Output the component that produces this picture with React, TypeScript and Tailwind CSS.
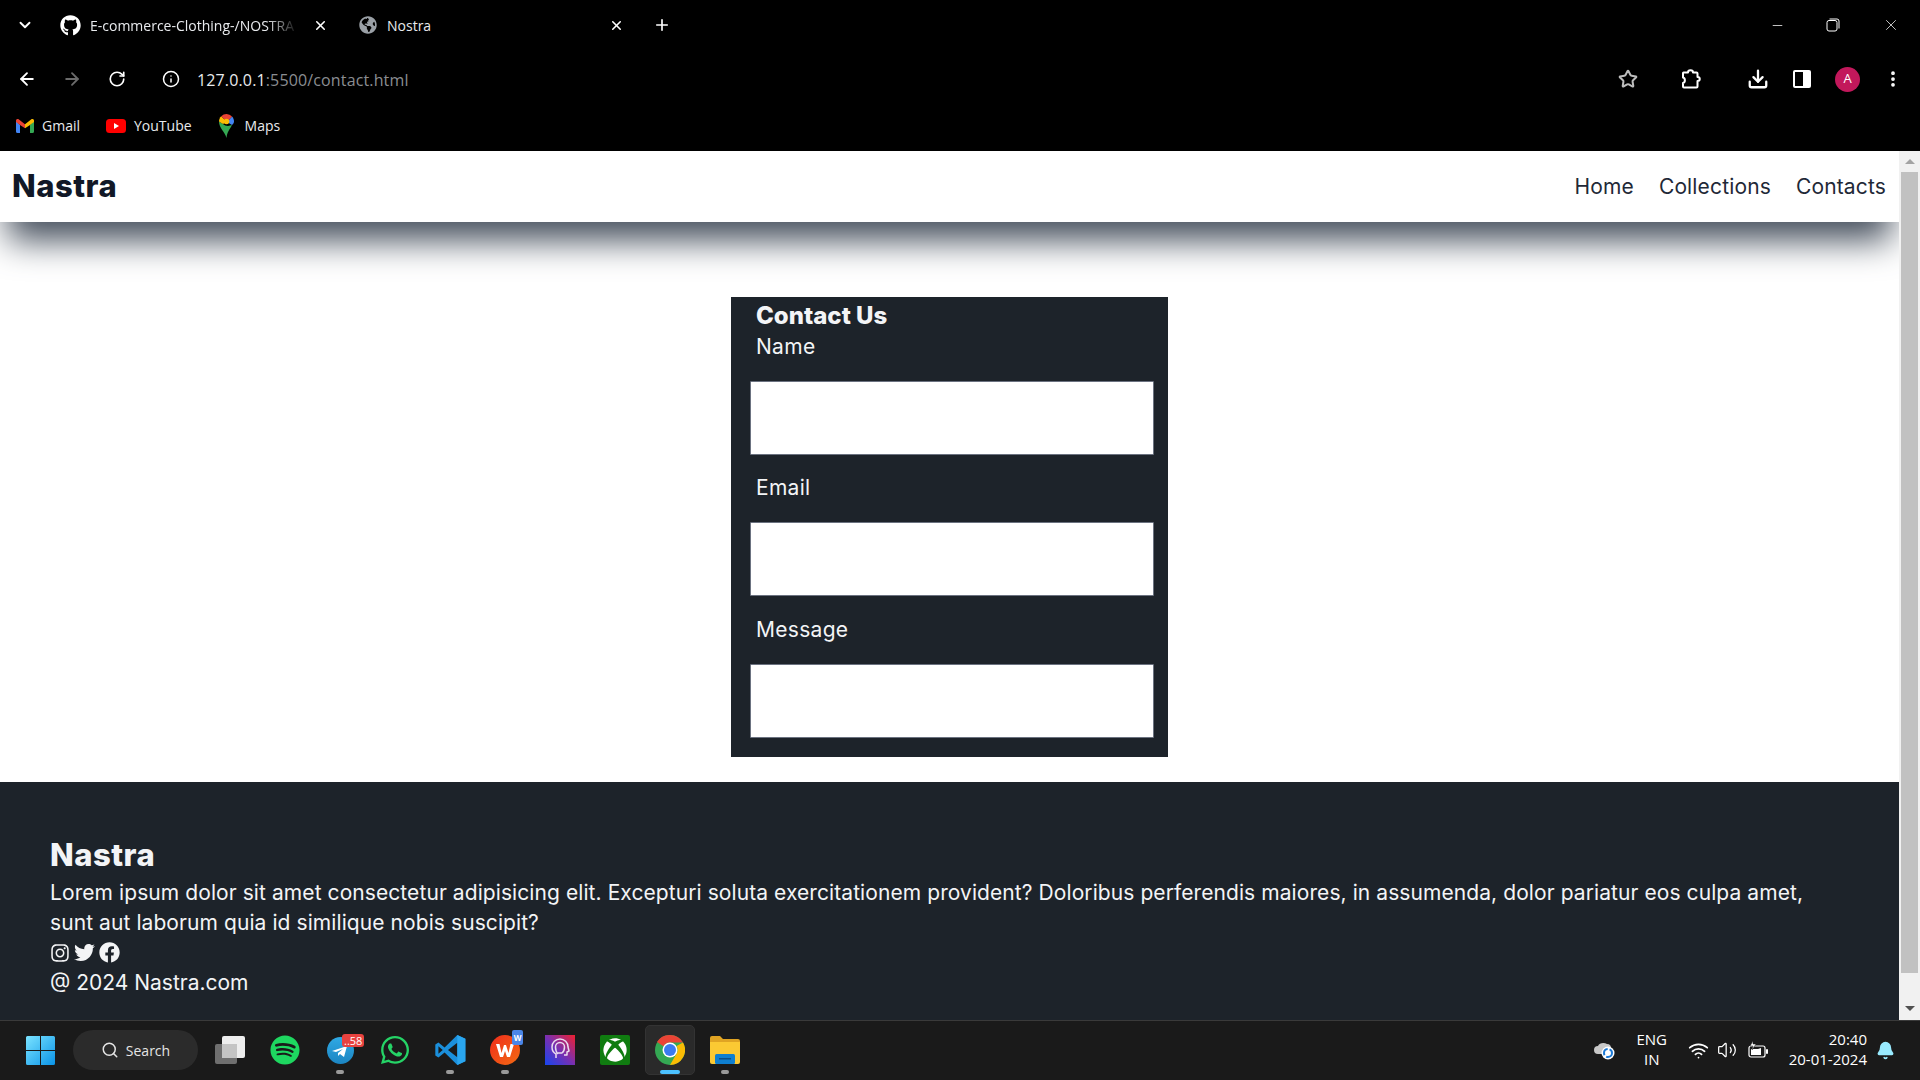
import { ArrowLeft, ArrowRight, ChevronDown, Download, Info, MoreVertical, Plus, RotateCw, Search, Star, Volume2, Wifi, X, Minus, Bell } from 'lucide-react';
import { FaFacebook, FaGithub, FaGlobeAmericas, FaInstagram, FaSpotify, FaTwitter, FaWhatsapp, FaXbox } from 'react-icons/fa';

const page = { fontFamily: 'Inter, "Noto Sans", sans-serif' };
const ui = { fontFamily: '"Open Sans", "Noto Sans", sans-serif' };

const GmailIcon = () => (
  <svg width="18" height="14" viewBox="0 0 18 14">
    <path d="M0 2v10.500A1.500 1.500 0 0 0 1.500 14H4V6z" fill="#4285f4" />
    <path d="M18 2v10.500a1.500 1.500 0 0 1-1.500 1.500H14V6z" fill="#34a853" />
    <path d="M4 6 0 3V1.500C0 .2 1.600-.5 2.600.3L9 5.200v4z" fill="#ea4335" />
    <path d="m14 6 4-3V1.500c0-1.300-1.600-2-2.600-1.200L9 5.200v4z" fill="#fbbc04" />
  </svg>
);

const YoutubeIcon = () => (
  <svg width="20" height="14" viewBox="0 0 20 14">
    <rect width="20" height="14" rx="3.500" fill="#f00" />
    <path d="m8 4 5 3-5 3z" fill="#fff" />
  </svg>
);

const MapsIcon = () => (
  <svg width="15" height="24" viewBox="0 0 15 24">
    <path d="M7.500 24C6 18 0 14 0 7.500L4 10c1 1 3 2 5 2l4-1c-2 4-5 7-5.500 13z" fill="#34a853" />
    <path d="M13 11c1-1 2-2 2-3.500 0-2-.8-3.700-2-5L8 8z" fill="#4285f4" />
    <path d="M0 7.500c0-2 .8-3.800 2.200-5.200L8 8l-4 2z" fill="#fbbc04" />
    <path d="M2.200 2.300A7.500 7.500 0 0 1 13 2.500L8 8z" fill="#ea4335" />
    <circle cx="7.500" cy="7.500" r="2.800" fill="#fbbc04" />
  </svg>
);

const PuzzleIcon = () => (
  <svg width="22" height="20" viewBox="0 0 22 20" fill="none" stroke="#fff" strokeWidth="2" strokeLinejoin="round">
    <path d="M2.500 3.500h4.500c0-3 5-3 5 0h3.500a1 1 0 0 1 1 1V8c3 0 3 4 0 4v5.500a1 1 0 0 1-1 1H3a1 1 0 0 1-1-1V14c2.500-.5 2.500-5 0-5.500V4a.5.5 0 0 1 .5-.5z" />
  </svg>
);

const PanelIcon = () => (
  <svg width="18" height="18" viewBox="0 0 18 18">
    <rect width="18" height="18" rx="2" fill="#fff" />
    <rect x="2" y="2" width="8" height="14" fill="#000" />
  </svg>
);

const WindowsLogo = () => (
  <svg width="29" height="29" viewBox="0 0 29 29">
    <defs>
      <linearGradient id="win" x1="0" y1="0" x2="1" y2="1">
        <stop offset="0" stopColor="#7be3ff" />
        <stop offset="1" stopColor="#0a94e8" />
      </linearGradient>
    </defs>
    <path d="M0 1.500A1.500 1.500 0 0 1 1.500 0H14v14H0zM15 0h12.500A1.500 1.500 0 0 1 29 1.500V14H15zM0 15h14v14H1.500A1.500 1.500 0 0 1 0 27.500zM15 15h14v12.500a1.500 1.500 0 0 1-1.500 1.500H15z" fill="url(#win)" />
  </svg>
);

const TaskViewIcon = () => (
  <svg width="30" height="28" viewBox="0 0 30 28">
    <rect x="7" y="0" width="23" height="22" rx="2" fill="#eeeeee" />
    <rect x="0" y="8" width="22" height="20" rx="2" fill="#6f6f6f" />
    <rect x="7" y="8" width="15" height="14" fill="#c4c4c4" />
  </svg>
);

const TelegramIcon = () => (
  <div className="relative h-[30px] w-[30px]">
    <svg width="27" height="27" viewBox="0 0 27 27" className="ml-[2px] mt-[2px]">
      <defs>
        <linearGradient id="tg" x1="0" y1="0" x2="0" y2="1">
          <stop offset="0" stopColor="#2fa9e4" />
          <stop offset="1" stopColor="#1c85c2" />
        </linearGradient>
      </defs>
      <circle cx="13.500" cy="13.500" r="13.500" fill="url(#tg)" />
      <path d="m5 14 15-5-3 11-4-3-2 2v-3l5-4-7 3z" fill="#fff" />
    </svg>
    <span className="absolute -top-[1px] left-[17px] rounded-[3px] bg-[#e8423f] px-[2px] text-[11px] leading-[13px] text-white" style={ui}>..58</span>
  </div>
);

const VscodeIcon = () => (
  <svg width="31" height="32" viewBox="0 0 100 100">
    <path d="M72 2 31 42 11 26 1 32v36l10 6 20-16 41 40 26-12V14z" fill="#1b8fdb" />
    <path d="M72 27v46L42 50z" fill="#1a1a1a" />
    <path d="M11 38v24l14-12z" fill="#1a1a1a" />
    <path d="M72 2l26 12v72L72 98z" fill="#2aa6ef" />
  </svg>
);

const WpsIcon = () => (
  <div className="relative h-[30px] w-[30px]">
    <svg width="30" height="30" viewBox="0 0 30 30">
      <defs>
        <linearGradient id="wps" x1="0" y1="0" x2="1" y2="1">
          <stop offset="0" stopColor="#f02d1c" />
          <stop offset="1" stopColor="#f26a12" />
        </linearGradient>
      </defs>
      <circle cx="15" cy="15" r="15" fill="url(#wps)" />
      <path d="M6 9h3.500l2 9 2.500-8h2l2.500 8 2-9H24l-4 13h-3l-2-6-2 6h-3z" fill="#fff" />
    </svg>
    <div className="absolute -top-[5px] left-[22px] flex h-[15px] w-[11px] items-center justify-center rounded-[2px] bg-[#4a86e8] text-[8px] font-bold text-white" style={ui}>W</div>
  </div>
);

const ArcIcon = () => (
  <svg width="30" height="30" viewBox="0 0 30 30">
    <defs>
      <linearGradient id="arc" x1="0" y1="1" x2="1" y2="0">
        <stop offset="0" stopColor="#1646f0" />
        <stop offset=".5" stopColor="#7a2fb0" />
        <stop offset="1" stopColor="#f0202e" />
      </linearGradient>
    </defs>
    <rect width="30" height="30" fill="url(#arc)" />
    <path d="M11 23v-4c-2-1-4-3-4-7a8 8 0 0 1 16 0l1 4-2 1v3h-3M13 19c-1.500-1.500-2.500-4-2.500-7a4.500 4.500 0 0 1 9 0c0 3-1 5-2.500 6h-4" fill="none" stroke="#eadcf0" strokeWidth="1.500" strokeLinejoin="round" />
  </svg>
);

const ChromeIcon = () => (
  <svg width="30" height="30" viewBox="0 0 30 30">
    <circle cx="15" cy="15" r="15" fill="#34a853" />
    <path d="M15 0a15 15 0 0 1 13 7.500H15a7.500 7.500 0 0 0-6.500 3.750L2 7A15 15 0 0 1 15 0z" fill="#ea4335" />
    <path d="M28 7.500A15 15 0 0 1 15 30l6.500-11.250A7.500 7.500 0 0 0 21.500 11z" fill="#fbbc04" />
    <circle cx="15" cy="15" r="7.500" fill="#fff" />
    <circle cx="15" cy="15" r="6" fill="#3b7bf0" />
  </svg>
);

const FolderIcon = () => (
  <svg width="30" height="28" viewBox="0 0 30 28">
    <path d="M0 2a2 2 0 0 1 2-2h8l3 3h15a2 2 0 0 1 2 2v3H0z" fill="#e0a423" />
    <path d="M0 6h30v20a2 2 0 0 1-2 2H2a2 2 0 0 1-2-2z" fill="#fbc933" />
    <rect x="5" y="18" width="20" height="10" rx="1.500" fill="#0f7fd0" />
    <rect x="9" y="22" width="12" height="1.500" fill="#0a4f8a" />
  </svg>
);

const CloudSyncIcon = () => (
  <svg width="21" height="20" viewBox="0 0 21 20">
    <path d="M4 14a4 4 0 0 1 0-8c1-3 6-4 9-2 3 0 4 2 4 4v6z" fill="#c8c8c8" />
    <circle cx="14" cy="13" r="6.500" fill="#fff" />
    <circle cx="14" cy="13" r="4" fill="none" stroke="#1b79d6" strokeWidth="2" strokeDasharray="8 2" />
  </svg>
);

const BatteryIcon = () => (
  <svg width="21" height="18" viewBox="0 0 21 18" fill="none">
    <rect x="1" y="5" width="16" height="11" rx="2" stroke="#fff" strokeWidth="1.200" />
    <path d="M3 14V8h7l3-1v7z" fill="#fff" />
    <rect x="18" y="8" width="2" height="5" rx="1" fill="#fff" />
    <path d="m5 0-3 5h3l-1 4 4-6H5z" fill="#fff" stroke="#1a1a1a" strokeWidth=".5" />
  </svg>
);

const Field = ({ label }: { label: string }) => (
  <div className="flex flex-col">
    <label className="ml-[25px] h-[34px] text-[21px] leading-[32px] tracking-[0.3px] text-[#f3f4f6]">{label}</label>
    <input className="ml-[19px] mt-[16px] h-[74px] w-[404px] rounded-[1px] border border-[#6b7280] bg-white" />
  </div>
);

const taskbarApps = [
  { icon: <TaskViewIcon /> },
  { icon: <FaSpotify size={30} color="#1ed760" /> },
  { icon: <TelegramIcon />, dot: true },
  { icon: <FaWhatsapp size={32} color="#25d366" /> },
  { icon: <VscodeIcon />, dot: true },
  { icon: <WpsIcon />, dot: true },
  { icon: <ArcIcon /> },
  { icon: <div className="flex h-[30px] w-[30px] items-center justify-center rounded-[2px] bg-[#107c10]"><FaXbox size={24} color="#fff" /></div> },
  { icon: <ChromeIcon />, active: true },
  { icon: <FolderIcon />, dot: true },
];

export default function App() {
  return (
    <div className="flex h-screen w-full flex-col overflow-hidden bg-white">
      {/* Browser chrome */}
      <header className="h-[151px] shrink-0 bg-black text-white" style={ui}>
        {/* Tabs */}
        <div className="flex h-[50px] items-center">
          <ChevronDown size={18} strokeWidth={2.5} className="ml-[16px]" />
          <FaGithub size={21} className="ml-[26px]" />
          <div className="ml-[9px] w-[208px] overflow-hidden whitespace-nowrap text-[14px] text-[#e8eaed] [mask-image:linear-gradient(to_right,black_85%,transparent)]">E-commerce-Clothing-/NOSTRA</div>
          <X size={15} strokeWidth={2.5} className="ml-[15px]" />
          <FaGlobeAmericas size={18} color="#9aa0a6" className="ml-[31px]" />
          <div className="ml-[10px] w-[214px] text-[14px] text-[#e8eaed]">Nostra</div>
          <X size={15} strokeWidth={2.5} className="ml-[8px]" />
          <Plus size={18} strokeWidth={2.2} className="ml-[29px]" />
          <Minus size={15} strokeWidth={1.2} className="ml-auto" />
          <svg width="14" height="14" viewBox="0 0 14 14" fill="none" stroke="#fff" className="ml-[41px]">
            <rect x="1" y="2.500" width="10" height="10.500" rx="2" />
            <path d="M3.500 1H11a2 2 0 0 1 2 2v7.500" />
          </svg>
          <X size={18} strokeWidth={1} className="ml-[42px] mr-[20px]" />
        </div>
        {/* Address bar */}
        <div className="flex h-[58px] items-center">
          <ArrowLeft size={20} strokeWidth={2.2} className="ml-[17px]" />
          <ArrowRight size={20} strokeWidth={2.2} color="#6b6b6b" className="ml-[25px]" />
          <RotateCw size={18} strokeWidth={2.2} className="ml-[26px]" />
          <Info size={18} strokeWidth={2} className="ml-[36px]" />
          <div className="ml-[17px] mt-[2px] text-[16px] leading-[26px] tracking-[0.14px] text-[#e8eaed]">
            127.0.0.1<span className="text-[#8a8d91]">:5500/contact.html</span>
          </div>
          <Star size={20} strokeWidth={2.4} color="#bdbdbd" className="ml-auto" />
          <div className="ml-[43px]"><PuzzleIcon /></div>
          <Download size={22} strokeWidth={2.5} className="ml-[44px]" />
          <div className="ml-[24px]"><PanelIcon /></div>
          <div className="ml-[24px] flex h-[25px] w-[25px] items-center justify-center rounded-full bg-[#c2185b] text-[13px]">A</div>
          <MoreVertical size={20} strokeWidth={2.5} className="ml-[23px] mr-[17px]" />
        </div>
        {/* Bookmarks */}
        <div className="flex h-[35px] items-center text-[14px] text-[#e8eaed]">
          <div className="ml-[16px]"><GmailIcon /></div>
          <span className="ml-[8px]">Gmail</span>
          <div className="ml-[26px]"><YoutubeIcon /></div>
          <span className="ml-[8px]">YouTube</span>
          <div className="ml-[27px] flex"><MapsIcon /></div>
          <span className="ml-[11px]">Maps</span>
        </div>
      </header>

      <div className="flex min-h-0 flex-1">
        {/* Page */}
        <div className="flex min-w-0 flex-1 flex-col overflow-hidden" style={page}>
          <nav className="relative z-10 flex h-[71px] shrink-0 items-center justify-between bg-white pl-[12px] pr-[13px] shadow-[0_26px_35px_-8px_#414b59]">
            <span className="text-[31px] font-extrabold tracking-[0.5px] text-[#111827]">Nastra</span>
            <div className="flex gap-[25px] text-[21px] tracking-[0.15px] text-[#1f2937]">
              <a>Home</a>
              <a>Collections</a>
              <a>Contacts</a>
            </div>
          </nav>

          <main className="flex h-[560px] shrink-0 justify-center pt-[75px]">
            <form className="h-[460px] w-[437px] bg-[#1d232a]">
              <h2 className="ml-[25px] h-[34px] text-[24px] font-extrabold leading-[37px] tracking-[0px] text-[#f3f4f6]">Contact Us</h2>
              <Field label="Name" />
              <div className="h-[17px]" />
              <Field label="Email" />
              <div className="h-[18px]" />
              <Field label="Message" />
            </form>
          </main>

          <footer className="flex-1 bg-[#1d232a] px-[50px] pt-[52px] text-[#f3f4f6]">
            <h3 className="h-[44px] text-[31px] font-extrabold leading-[42px] tracking-[0.5px]">Nastra</h3>
            <p className="text-[21px] leading-[30px] tracking-[0.08px]">
              Lorem ipsum dolor sit amet consectetur adipisicing elit. Excepturi soluta exercitationem provident? Doloribus perferendis maiores, in assumenda, dolor pariatur eos culpa amet,<br />
              sunt aut laborum quia id similique nobis suscipit?
            </p>
            <div className="flex h-[29px] items-center gap-[4px]">
              <FaInstagram size={20} />
              <FaTwitter size={21} />
              <FaFacebook size={21} />
            </div>
            <div className="text-[21px] leading-[32px]">@ 2024 Nastra.com</div>
          </footer>
        </div>

        {/* Scrollbar */}
        <div className="flex w-[21px] shrink-0 flex-col items-center justify-between bg-[#f1f1f1]">
          <div className="flex w-full flex-col items-center">
            <div className="flex h-[21px] w-full items-center justify-center">
              <div className="h-0 w-0 border-x-[5px] border-b-[5px] border-x-transparent border-b-[#a3a3a3]" />
            </div>
            <div className="h-[801px] w-[17px] bg-[#c1c1c1]" />
          </div>
          <div className="flex h-[24px] items-center justify-center">
            <div className="h-0 w-0 border-x-[5px] border-t-[5px] border-x-transparent border-t-[#505050]" />
          </div>
        </div>
      </div>

      {/* Taskbar */}
      <div className="flex h-[60px] shrink-0 items-center border-t border-[#3a3a3a] bg-[#1a1a1a] pb-[1px] text-white" style={ui}>
        <div className="ml-[26px] flex"><WindowsLogo /></div>
        <div className="ml-[18px] flex h-[40px] w-[125px] items-center justify-center gap-[7px] rounded-full bg-[#2b2b2b] text-[14px] text-[#e5e5e5]">
          <Search size={18} strokeWidth={2} />
          <span>Search</span>
        </div>
        <div className="ml-[4.500px] flex">
          {taskbarApps.map((app, i) => (
            <div key={i} className="relative flex h-[50px] w-[55px] items-center justify-center">
              {app.active && <div className="absolute inset-y-0 left-[2.500px] right-[2.500px] rounded-[5px] border border-[#333333] bg-[#2a2a2a]" />}
              <div className="relative flex">{app.icon}</div>
              {app.dot && <div className="absolute bottom-[1px] h-[4px] w-[8px] rounded-full bg-[#9a9a9a]" />}
              {app.active && <div className="absolute bottom-[1px] h-[4px] w-[20px] rounded-full bg-[#4cc2ff]" />}
            </div>
          ))}
        </div>
        <div className="ml-auto flex items-center">
          <CloudSyncIcon />
          <div className="ml-[19px] w-[36px] pb-[2px] text-center text-[15px] leading-[20px]">ENG<br />IN</div>
          <Wifi size={21} className="ml-[18px]" />
          <Volume2 size={20} strokeWidth={1.500} className="ml-[8px]" />
          <div className="ml-[11px] flex"><BatteryIcon /></div>
          <div className="ml-[20px] pb-[2px] text-right text-[15px] leading-[20px]">20:40<br />20-01-2024</div>
          <Bell size={19} fill="#99ebff" color="#99ebff" className="ml-[9px] mr-[25px]" />
        </div>
      </div>
    </div>
  );
}
